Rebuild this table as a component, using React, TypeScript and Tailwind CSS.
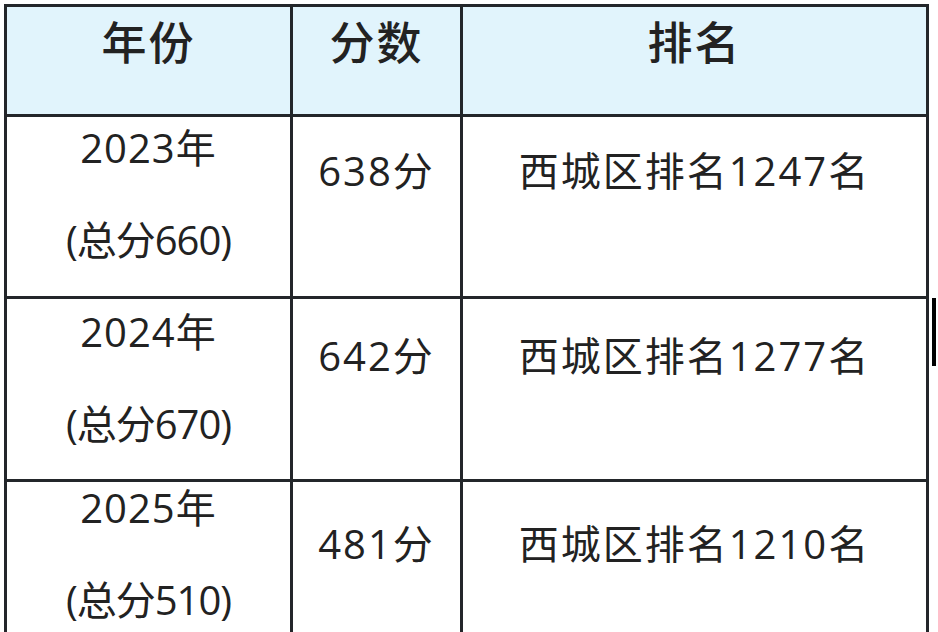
const headers = ['年份', '分数', '排名'];

const rows = [
  { year: '2023年', total: '(总分660)', score: '638分', rank: '西城区排名1247名', h: 'h-[182px]', p1: 'pt-[8px]', p2: 'pt-[31px]' },
  { year: '2024年', total: '(总分670)', score: '642分', rank: '西城区排名1277名', h: 'h-[183px]', p1: 'pt-[10px]', p2: 'pt-[34px]' },
  { year: '2025年', total: '(总分510)', score: '481分', rank: '西城区排名1210名', h: 'h-[183px]', p1: 'pt-[3px]', p2: 'pt-[39px]' },
];

const widths = ['w-[286px]', 'w-[170px]', 'w-[466px]'];

export default function App() {
  return (
    <div
      className="h-[632px] w-[938px] overflow-hidden bg-white text-[#222]"
      style={{ fontFamily: '"Open Sans", "Noto Sans CJK SC", sans-serif' }}
    >
      <div className="flex pl-[4px] pt-[4px]">
        {/* Table */}
        <div className="border-l-[3px] border-t-[3px] border-[#23262a]">
          {/* Header */}
          <div className="flex bg-[#e1f4fc]">
            {headers.map((h, i) => (
              <div
                key={h}
                className={`${widths[i]} h-[110px] border-b-[3px] border-r-[3px] border-[#23262a] pt-[12px] text-center text-[45px] font-medium leading-[44px] tracking-[2px]`}
                style={{ fontFamily: '"Noto Sans CJK SC", sans-serif' }}
              >
                {h}
              </div>
            ))}
          </div>

          {/* Body rows */}
          {rows.map((r) => (
            <div key={r.year} className="flex">
              <div className={`${widths[0]} ${r.h} ${r.p1} flex flex-col items-center gap-[46px] border-b-[3px] border-r-[3px] border-[#23262a] text-[40px] leading-[46px]`}>
                <div className="tracking-[1px]">{r.year}</div>
                <div className="tracking-[-1px]">{r.total}</div>
              </div>
              <div className={`${widths[1]} ${r.h} ${r.p2} border-b-[3px] border-r-[3px] border-[#23262a] text-center text-[40px] leading-[46px] tracking-[2px]`}>
                {r.score}
              </div>
              <div className={`${widths[2]} ${r.h} ${r.p2} border-b-[3px] border-r-[3px] border-[#23262a] text-center text-[40px] leading-[46px] tracking-[2px]`}>
                {r.rank}
              </div>
            </div>
          ))}
        </div>

        {/* stray dark bar at the right edge */}
        <div className="ml-[3px] mt-[294px] h-[68px] w-[4px] bg-black" />
      </div>
    </div>
  );
}
